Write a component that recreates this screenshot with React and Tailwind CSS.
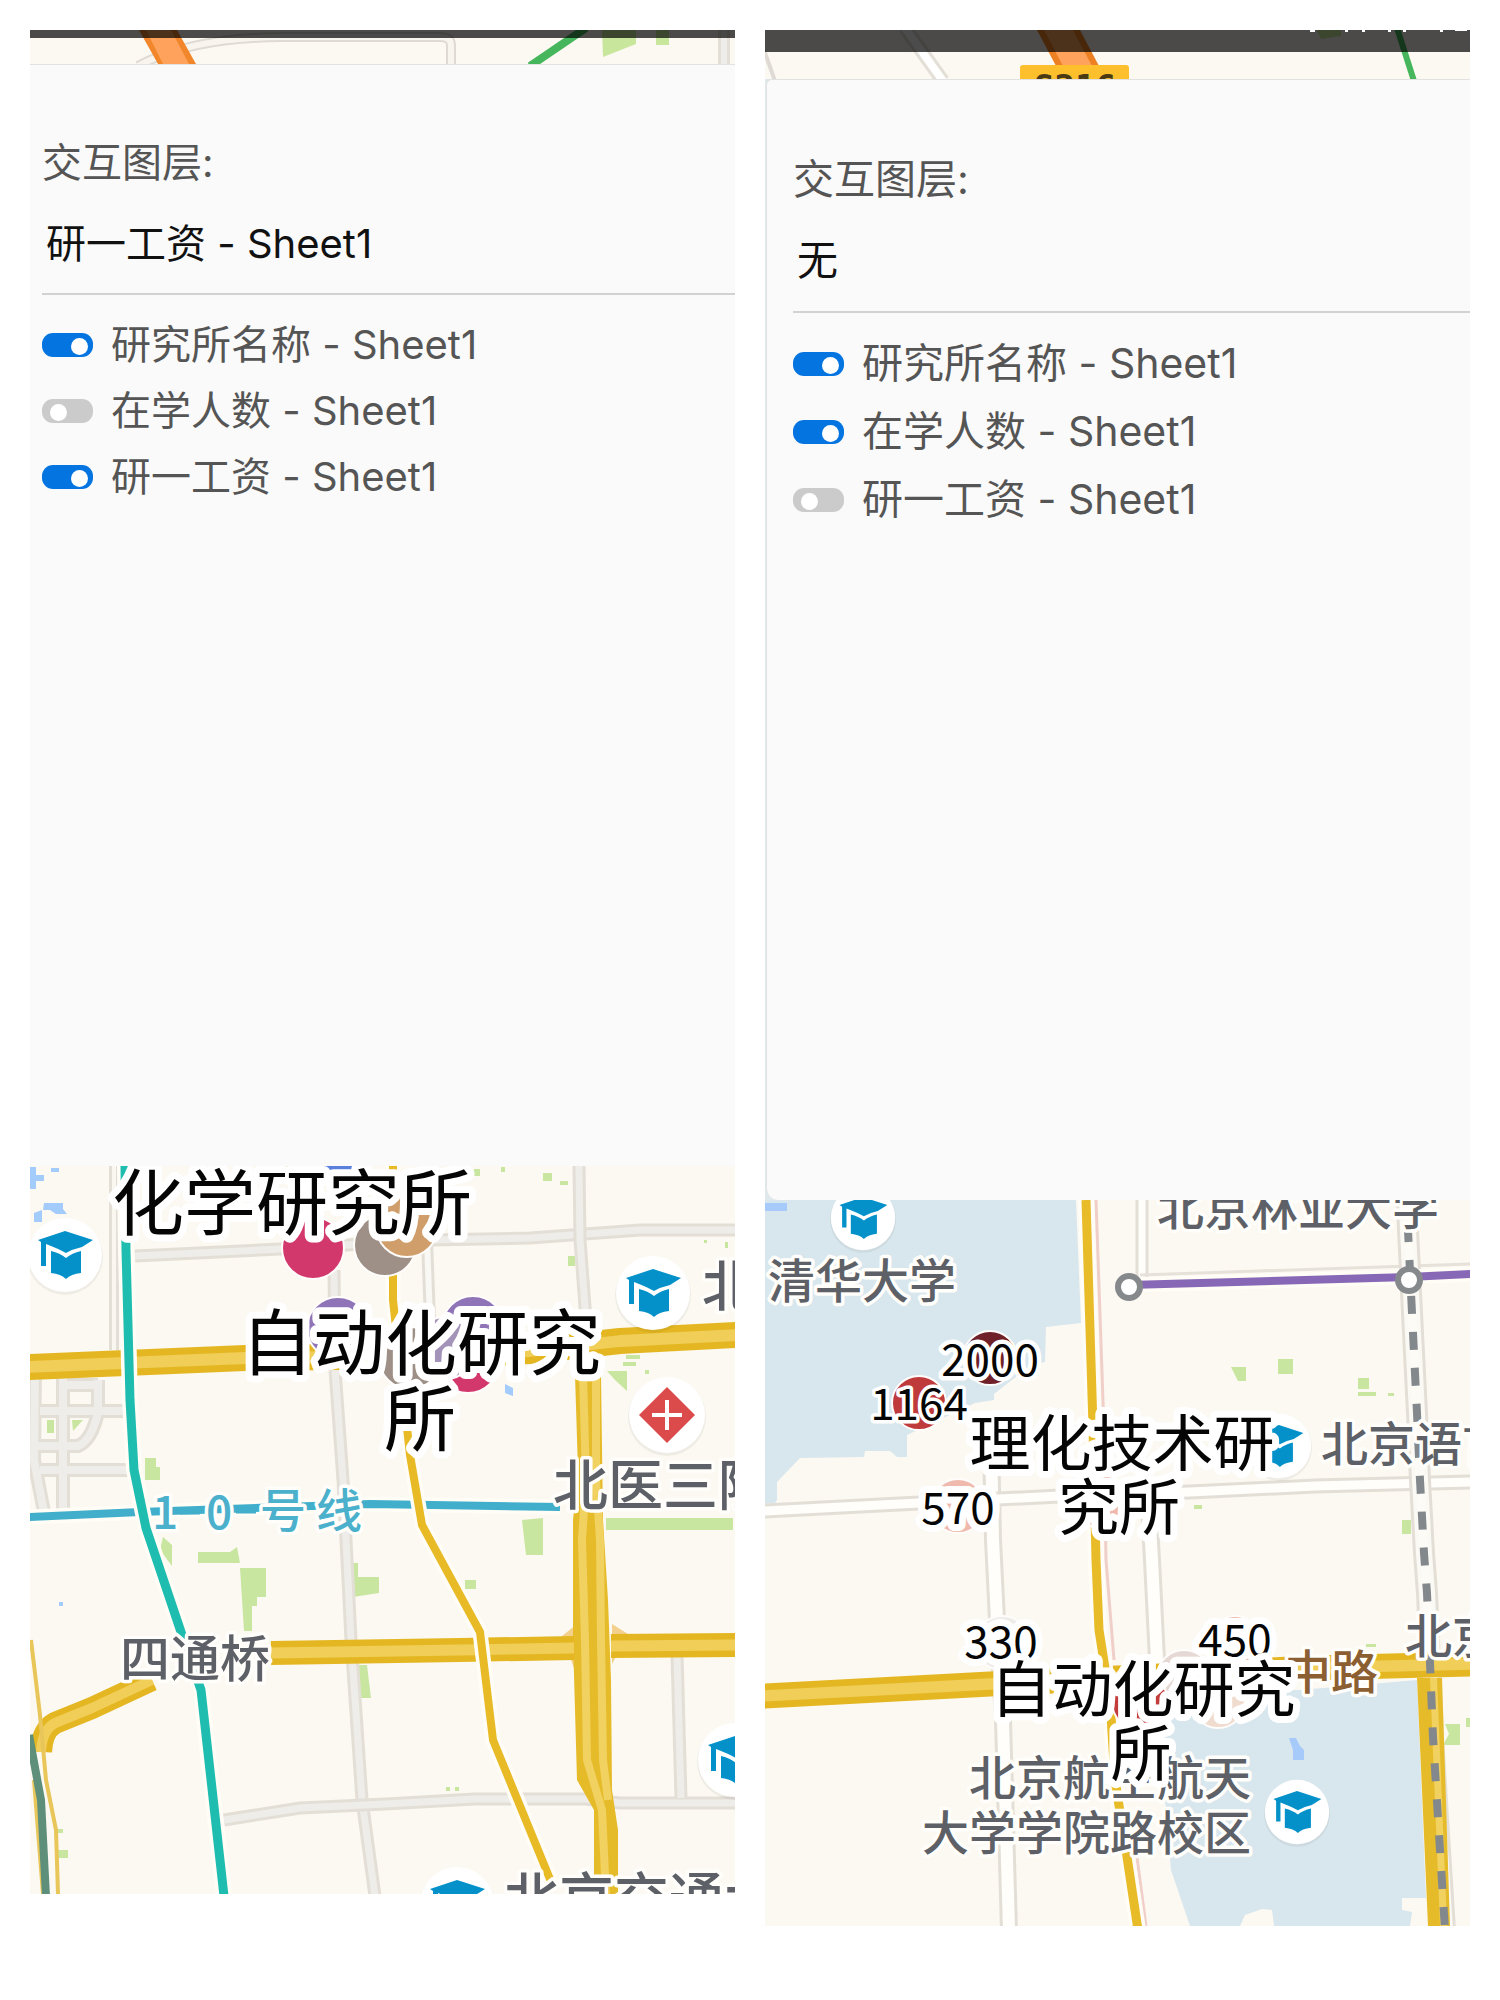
import React, { useState } from "react";

const LAYERS = ["研究所名称 - Sheet1", "在学人数 - Sheet1", "研一工资 - Sheet1"];

/* ---------- map primitives ---------- */

function Street({ d, w = 13, fill = "#efede9" }) {
  return (
    <g fill="none">
      <path d={d} stroke="#e3dfd7" strokeWidth={w} />
      <path d={d} stroke={fill} strokeWidth={w - 6} />
    </g>
  );
}

function Highway({ d, w = 24 }) {
  return (
    <g fill="none" strokeLinejoin="round">
      <path d={d} stroke="#e4b722" strokeWidth={w} />
      <path d={d} stroke="#f0ce58" strokeWidth={w / 2.2} />
    </g>
  );
}

function Line({ d, color, w = 9 }) {
  return (
    <g fill="none" strokeLinejoin="round">
      <path d={d} stroke="#fffdf6" strokeWidth={w + 7} />
      <path d={d} stroke={color} strokeWidth={w} />
    </g>
  );
}

function School({ x, y, s = 1 }) {
  return (
    <g transform={`translate(${x} ${y}) scale(${s})`}>
      <circle cy="2" r="38" fill="#000" opacity="0.05" />
      <circle r="37" fill="#fff" />
      <g fill="#0491c9">
        <path d="M-27 -15L0 -24L28 -15L17 -8Q8 -6 1 -2Q-6 -6 -14 -9L-19 -11V11H-24V-13Z" />
        <path d="M-14 -4Q-5 -2 1 3Q7 -2 16 -4V18Q6 19 1 24Q-4 19 -14 18Z" />
      </g>
    </g>
  );
}

function Hospital({ x, y }) {
  return (
    <g transform={`translate(${x} ${y})`}>
      <circle cy="2" r="39" fill="#000" opacity="0.05" />
      <circle r="38" fill="#fff" />
      <path d="M0 -28L28 0L0 28L-28 0Z" fill="#dc4b4b" />
      <path d="M-15 0H15M0 -15V15" stroke="#fff" strokeWidth="4" />
    </g>
  );
}

function Dot({ x, y, r = 31, color }) {
  return <circle cx={x} cy={y} r={r} fill={color} stroke="#fffdfb" strokeWidth="2" />;
}

function Place({ x, y, size, anchor = "start", color = "#5d6167", children }) {
  return (
    <text
      x={x}
      y={y}
      fontSize={size}
      fontWeight="500"
      textAnchor={anchor}
      fill={color}
      stroke="#fffefb"
      strokeWidth="7"
      strokeLinejoin="round"
      paintOrder="stroke"
    >
      {children}
    </text>
  );
}

function Caption({ x, y, size, halo = 14, children }) {
  return (
    <text
      x={x}
      y={y}
      fontSize={size}
      textAnchor="middle"
      fill="#050505"
      stroke="#fff"
      strokeWidth={halo}
      strokeLinejoin="round"
      paintOrder="stroke"
      className="font-['KaiTi','Kaiti_SC','Noto_Sans_CJK_SC',sans-serif]"
    >
      {children}
    </text>
  );
}

const MAP_CLASS = "block h-auto w-full bg-[#fcf9f2] font-['Noto_Sans_CJK_SC',sans-serif]";

/* ---------- map drawings ---------- */

function TopStripA() {
  return (
    <svg viewBox="30 30 705 34" className={MAP_CLASS} aria-hidden="true">
      <path d="M138 66Q190 38 280 37H440Q451 37 451 45V66" fill="none" stroke="#dfdad3" strokeWidth="10" />
      <path d="M138 66Q190 38 280 37H440Q451 37 451 45V66" fill="none" stroke="#f8f5ef" strokeWidth="6" />
      <Street d="M724 30V66" w={12} />
      <path d="M139 30H177L196 64H158Z" fill="#f2862a" />
      <path d="M146 30H171L189 64H163Z" fill="#ffa35c" />
      <path d="M586 28L530 66" stroke="#45b65c" strokeWidth="8" />
      <path d="M602 30H636V44L603 57ZM656 30H669V45H656Z" fill="#c8e69c" />
      <rect x="30" y="30" width="705" height="8" fill="#000" opacity="0.7" />
    </svg>
  );
}

function TopStripB() {
  return (
    <svg viewBox="765 30 705 49" className={MAP_CLASS}>
      <Street d="M905 28L943 81" w={14} fill="#ffffff" />
      <path d="M764 50L775 81" stroke="#dfdad3" strokeWidth="4" />
      <path d="M1037 30H1080L1099 66H1056Z" fill="#ee8024" />
      <path d="M1044 30H1073L1092 66H1063Z" fill="#ffa35c" />
      <path d="M1397 28L1414 81" stroke="#45b65c" strokeWidth="6" />
      <path d="M1317 30H1341V36L1321 39Z" fill="#c8e69c" />
      <rect x="1020" y="65" width="109" height="20" rx="3" fill="#fdc02c" />
      <text x="1075" y="99" fontSize="34" fontWeight="700" textAnchor="middle" fill="#4a3a14" className="font-['DejaVu_Sans_Mono',monospace]">
        S216
      </text>
      <rect x="765" y="30" width="705" height="22" fill="#000" opacity="0.7" />
      <path d="M1310 30h5v2h-5zM1345 30h3v2h-3zM1362 30h3v2h-3zM1388 30h3v2h-3zM1403 30h3v2h-3zM1440 30h3v2h-3zM1455 30h12v1h-12z" fill="#fff" />
    </svg>
  );
}

function MapA() {
  return (
    <svg viewBox="30 1166 705 728" className={MAP_CLASS} role="img" aria-label="地图">
      <g fill="#c9e6a0">
        <path d="M198 1552H230L237 1547L240 1563H198Z" />
        <path d="M240 1568H266V1597H257V1606H252V1631H244Z" />
        <path d="M353 1563H358V1577H379V1593L353 1597Z" />
        <path d="M356 1665H367L371 1698H357Z" />
        <path d="M163 1537L172 1545V1566L160 1550Z" />
        <path d="M522 1520L543 1518V1555H526Z" />
        <path d="M606 1518H733V1530H606Z" />
        <path d="M465 1580H476V1589H465ZM145 1458H156V1467H160V1480H145Z" />
        <path d="M47 1420H54V1433H47ZM72 1420H83L73 1431Z" />
        <path d="M543 1173H552V1181H543ZM560 1181H568V1185H560ZM474 1169H480V1176H474ZM501 1167H505V1172H501Z" />
        <path d="M568 1256H575V1266H568ZM725 1242H728V1248H725ZM704 1240H707V1243H704Z" />
        <path d="M607 1371H627V1391L615 1380ZM626 1355H640V1359H626ZM623 1362H636V1366H623ZM645 1370H649V1374H645Z" />
        <path d="M55 1850H68V1858H55ZM55 1829H63V1833H55ZM446 1787H450V1791H446ZM455 1787H459V1791H455Z" />
      </g>
      <g fill="#a3cbfb">
        <path d="M44 1203H63V1209L67 1214H56L50 1210H43ZM34 1213L42 1210V1222H34ZM51 1168H59V1172H51ZM30 1167H36V1175H44V1181H36V1189H30Z" />
        <path d="M505 1384L513 1388V1396L505 1393ZM59 1602H63V1606H59Z" />
      </g>

      <Street d="M114 1166V1350" w={10} fill="#faf7f1" />
      <Street d="M135 1256L280 1249L430 1240L530 1238L640 1230L735 1230" />
      <Street d="M579 1166L580 1240L586 1320" />
      <Street d="M427 1240L430 1320" w={12} fill="#faf8f4" />
      <Street d="M334 1270L335 1370L343 1480L347 1560L351 1640L362 1800L375 1896" />
      <Street
        d="M35 1370L34 1460L44 1512M63 1375V1510M40 1411H125M98 1380V1412Q92 1440 78 1446H36M40 1470H130M63 1385H98"
        w={14}
      />
      <Street d="M224 1820L300 1808L385 1804L475 1799L585 1799L620 1803H735" />
      <Street d="M677 1655L681 1798" />

      <Highway d="M28 1367L245 1358L420 1356L530 1351L620 1341L736 1335" w={26} />
      <path d="M562 1636L577 1624V1676ZM612 1624L628 1634L612 1664Z" fill="#f3d08c" />
      <path d="M575 1375H601L603 1520L608 1600L611 1680L612 1790L618 1830V1896H594V1810L577 1780L573 1640L573 1520L578 1470Z" fill="#e6bb29" />
      <path d="M583 1375L586 1480L582 1540L585 1640L587 1760L602 1810L606 1896M596 1375V1480L600 1540L601 1640L603 1760L608 1800" fill="none" stroke="#f1d160" strokeWidth="8" />
      <Highway d="M271 1653L460 1650L574 1648" />
      <Highway d="M611 1646L736 1645" />
      <Highway d="M152 1680L92 1708L55 1723Q42 1730 41 1752" w={22} />
      <path d="M31 1640L40 1715L46 1780L56 1830L58 1894M34 1780L43 1894" fill="none" stroke="#e9c65a" strokeWidth="4" />
      <path d="M29 1735L41 1800L46 1896" fill="none" stroke="#5d8f7b" strokeWidth="8" />

      <Line d="M28 1517L140 1512L370 1504L560 1507" color="#41afcb" w={8} />
      <Line d="M125 1166L126 1250L130 1400L134 1470L146 1528L181 1632L201 1690L224 1896" color="#1fbdb0" />
      <Line d="M393 1166V1300L410 1455L422 1525L480 1632L493 1740L552 1884" color="#e8ba26" w={8} />

      <School x={65} y={1255} />
      <School x={653} y={1293} />
      <School x={735} y={1760} />
      <School x={457} y={1904} />
      <Hospital x={667} y={1415} />

      <Place x={702} y={1306} size={55}>北</Place>
      <Place x={553} y={1505} size={55}>北医三院</Place>
      <Place x={120} y={1677} size={50}>四通桥</Place>
      <Place x={504} y={1918} size={55}>北京交通大</Place>
      <Place x={152} y={1529} size={46} color="#4bb0cc">1</Place>
      <Place x={206} y={1529} size={46} color="#4bb0cc">0</Place>
      <Place x={260} y={1527} size={46} color="#4bb0cc">号</Place>
      <Place x={316} y={1527} size={46} color="#4bb0cc">线</Place>
      <path d="M180 1511H200M236 1510H256" stroke="#41afcb" strokeWidth="7" />

      <Dot x={288} y={1138} color="#cf9e6b" />
      <Dot x={338} y={1156} color="#5b7fdc" />
      <Dot x={313} y={1248} color="#d3386c" />
      <Dot x={385} y={1245} color="#9e9087" />
      <Dot x={407} y={1226} color="#cf9e6b" />
      <Dot x={338} y={1328} color="#8f74b8" />
      <Dot x={410} y={1358} color="#9e9087" />
      <Dot x={468} y={1362} color="#d3386c" />
      <Dot x={473} y={1327} color="#8f74b8" />
      <Dot x={445} y={1348} color="#a493b8" />

      <Caption x={292} y={1229} size={72}>化学研究所</Caption>
      <Caption x={421} y={1369} size={72}>自动化研究</Caption>
      <Caption x={420} y={1445} size={72}>所</Caption>
    </svg>
  );
}

function MapB() {
  const rail = "M1407 1200L1408 1230L1412 1313L1417 1413L1420 1480L1424 1553L1427 1593L1430 1663L1433 1737L1440 1850L1445 1930";
  return (
    <svg viewBox="765 1200 705 726" className={MAP_CLASS} role="img" aria-label="地图">
      <path
        d="M765 1200H1076L1081 1323L1046 1327L1045 1362L1030 1366L994 1394V1400L975 1403L907 1435V1457H897L890 1451H865L864 1457L800 1458L777 1482V1500L775 1503L765 1504Z"
        fill="#d8e6ed"
      />
      <path
        d="M1165 1690H1300L1417 1680L1426 1898H1402V1910L1412 1912L1410 1926H1274L1272 1910L1262 1909L1245 1915L1240 1926H1190L1171 1870L1165 1800Z"
        fill="#d8e6ed"
      />
      <path d="M765 1203H787V1211H765ZM1289 1738L1296 1738L1300 1746L1304 1750V1760H1293V1750Z" fill="#a6cbfb" />
      <g fill="#c9e6a0">
        <path d="M1231 1367H1246V1381H1238ZM1278 1359H1293V1374H1278ZM1358 1378H1369V1389H1358ZM1358 1392H1376V1396H1358ZM1388 1393H1394V1396H1388Z" />
        <path d="M1402 1520H1411V1534H1402ZM1194 1505H1202V1509H1194ZM1445 1724H1460V1745H1443L1449 1734ZM1366 1644H1376V1647H1366ZM1466 1718H1470V1727H1466Z" />
      </g>

      <Street d="M1142 1200V1278" fill="#fffefb" />
      <Street d="M991 1440L993 1540L997 1620L1003 1720L1009 1930" w={18} fill="#fffefb" />
      <Street d="M1148 1490L1152 1560L1158 1680" w={18} fill="#fffefb" />
      <Street d="M763 1511L880 1505L1060 1496L1190 1492L1315 1486L1472 1482" w={15} fill="#fffefb" />
      <path d="M1140 1275L1470 1264" fill="none" stroke="#e6e1d9" strokeWidth="3" />
      <Street d={rail} w={22} fill="#fbf9f4" />

      <Highway d="M763 1696L990 1684L1160 1676L1310 1668L1472 1664" w={25} />
      <path d="M1417 1678H1442L1450 1926H1428Z" fill="#e6bb29" />
      <path d="M1437 1678L1447 1926H1440L1430 1678Z" fill="#f1d160" />
      <path d={rail} fill="none" stroke="#fdfbf6" strokeWidth="9" strokeDasharray="450 900" />
      <path d={rail} fill="none" stroke="#83888c" strokeWidth="8" strokeDasharray="18 18" strokeDashoffset="12" />

      <Line d="M1129 1285L1409 1277L1472 1274" color="#8768b6" w={8} />
      <circle cx="1129" cy="1287" r="11" fill="#fff" stroke="#85898c" strokeWidth="6" />
      <circle cx="1409" cy="1280" r="11" fill="#fff" stroke="#85898c" strokeWidth="6" />

      <path d="M1096 1200L1104 1430L1106 1560L1114 1660M1136 1850L1146 1926" fill="none" stroke="#f0cfc8" strokeWidth="3" />
      <Line d="M1086 1200L1093 1427L1096 1560L1099 1630L1110 1700L1115 1780L1126 1850L1138 1930" color="#e8bb28" w={9} />

      <School x={863} y={1218} s={0.87} />
      <School x={1279} y={1446} s={0.87} />
      <School x={1297} y={1812} s={0.87} />

      <Place x={768} y={1298} size={47}>清华大学</Place>
      <Place x={1157} y={1225} size={47}>北京林业大学</Place>
      <Place x={1321} y={1461} size={47}>北京语言</Place>
      <Place x={1405} y={1653} size={47}>北京</Place>
      <Place x={1284} y={1689} size={47} color="#8c5f33">中路</Place>
      <Place x={1251} y={1795} size={47} anchor="end">北京航空航天</Place>
      <Place x={1251} y={1850} size={47} anchor="end">大学学院路校区</Place>

      <Dot x={990} y={1358} r={27} color="#6f2029" />
      <Dot x={919} y={1403} r={27} color="#bf3b3b" />
      <Dot x={958} y={1506} r={27} color="#efb9ad" />
      <Dot x={1105} y={1503} r={27} color="#efb9ad" />
      <Dot x={1002} y={1643} r={27} color="#efecea" />
      <Dot x={1235} y={1643} r={27} color="#efb9ad" />
      <Dot x={1184} y={1677} r={27} color="#e6d8d4" />
      <Dot x={1218} y={1701} r={27} color="#f0dccf" />
      <Dot x={1140} y={1702} r={28} color="#c33c3c" />

      <Caption x={958} y={1524} size={44}>570</Caption>
      <Caption x={1001} y={1658} size={44}>330</Caption>
      <Caption x={1235} y={1656} size={44}>450</Caption>
      <Caption x={1122} y={1466} size={61}>理化技术研</Caption>
      <Caption x={1119} y={1530} size={61}>究所</Caption>
      <Caption x={1143} y={1712} size={61}>自动化研究</Caption>
      <Caption x={1141} y={1776} size={61}>所</Caption>
      <Caption x={990} y={1376} size={44} halo={9}>2000</Caption>
      <Caption x={919} y={1420} size={44} halo={7}>1164</Caption>
    </svg>
  );
}

/* ---------- layer panel ---------- */

function LayerPanel({ id, active, visible, className, textClass, selectClass, rowClass }) {
  const [on, setOn] = useState(visible);
  const [layer, setLayer] = useState(active);
  return (
    <section className={`border-t border-[#e2e2e2] bg-[#fafafa] text-[#555555] ${className} ${textClass}`}>
      <label htmlFor={`${id}-layer`} className="block leading-[48px]">
        交互图层:
      </label>
      <select
        id={`${id}-layer`}
        value={layer}
        onChange={(e) => setLayer(e.target.value)}
        className={`mt-[7px] block w-full appearance-none border-b-2 border-[#d2d2d2] bg-transparent pl-1 text-[#111111] outline-none ${selectClass}`}
      >
        <option>无</option>
        {LAYERS.map((name) => (
          <option key={name}>{name}</option>
        ))}
      </select>
      <ul className="pt-[17px]">
        {LAYERS.map((name, i) => (
          <li key={name}>
            <label className={`flex items-center gap-[18px] ${rowClass}`}>
              <input
                type="checkbox"
                role="switch"
                checked={on[i]}
                onChange={() => setOn(on.map((v, k) => (k === i ? !v : v)))}
                className="flex h-6 w-[51px] shrink-0 appearance-none items-center rounded-[11px] bg-[#cbcbcb] px-2 pt-0.5 before:size-[17px] before:rounded-full before:bg-white checked:justify-end checked:bg-[#0374e0] checked:px-[5px]"
              />
              <span>{name}</span>
            </label>
          </li>
        ))}
      </ul>
    </section>
  );
}

export default function App() {
  return (
    <main className="grid grid-cols-2 items-start gap-[30px] bg-white p-[30px]">
      <article>
        <TopStripA />
        <LayerPanel
          id="a"
          active="研一工资 - Sheet1"
          visible={[true, false, true]}
          className="pt-[74px] pb-[656px] pl-3"
          textClass="font-['Inter','Noto_Sans_CJK_SC',sans-serif] text-[40px]"
          selectClass="h-[101px]"
          rowClass="h-[66px]"
        />
        <MapA />
      </article>
      <article className="bg-[#dfe8ec]">
        <TopStripB />
        <LayerPanel
          id="b"
          active="无"
          visible={[true, true, false]}
          className="ml-px rounded-tl-md rounded-bl-xl border-l pt-[75px] pb-[666px] pl-[26px]"
          textClass="font-['Inter','Noto_Sans_CJK_SC',sans-serif] text-[41px]"
          selectClass="h-[103px]"
          rowClass="h-[68px]"
        />
        <MapB />
      </article>
    </main>
  );
}
